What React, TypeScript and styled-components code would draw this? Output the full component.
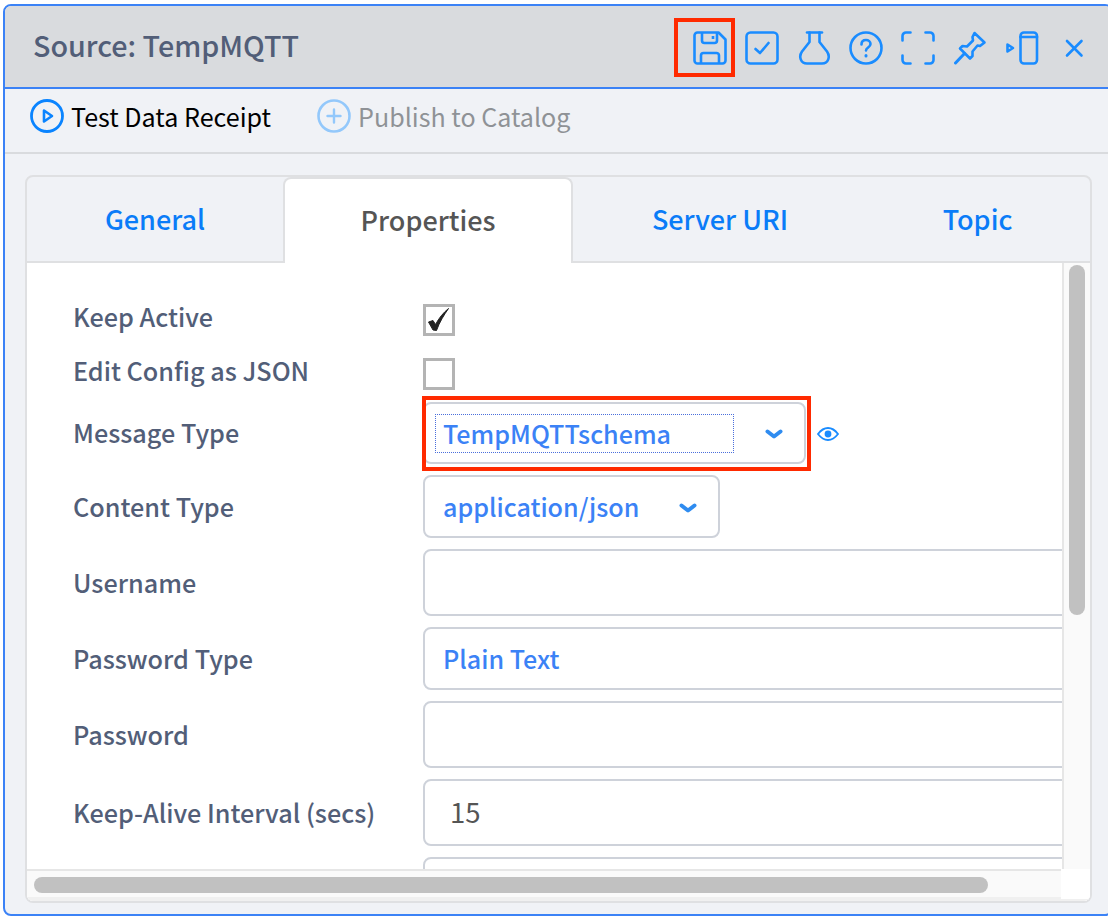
import React from "react";
import styled, { createGlobalStyle } from "styled-components";

const GlobalStyle = createGlobalStyle`
  html, body {
    margin: 0;
    padding: 0;
    background: #ffffff;
    overflow: hidden;
  }
  *, *::before, *::after {
    box-sizing: border-box;
  }
`;

const FONT = `"Noto Sans CJK SC", "Noto Sans", sans-serif`;

const SaveIcon = () => (
  <svg width="34" height="34" viewBox="0 0 34 34" fill="none" stroke="#1a8cff" strokeWidth="2.6" strokeLinejoin="round">
    <path d="M4.500 1.500h21L32.500 8.500v21a3 3 0 0 1-3 3h-25a3 3 0 0 1-3-3v-25a3 3 0 0 1 3-3z" />
    <path d="M9 1.500v8a2.500 2.500 0 0 0 2.500 2.500h10a2.500 2.500 0 0 0 2.500-2.500v-8" />
    <path d="M20 5v3" />
    <path d="M8 32.500v-8a2.500 2.500 0 0 1 2.500-2.500h13a2.500 2.500 0 0 1 2.500 2.500v8" />
  </svg>
);

const CheckSquareIcon = () => (
  <svg width="34" height="34" viewBox="0 0 34 34" fill="none" stroke="#1a8cff" strokeWidth="2.6" strokeLinecap="round" strokeLinejoin="round">
    <rect x="1.500" y="1.500" width="31" height="31" rx="4" />
    <path d="M10.500 18l4.500 4 8.500-10" />
  </svg>
);

const FlaskIcon = () => (
  <svg width="34" height="34" viewBox="0 0 34 34" fill="none" stroke="#1a8cff" strokeWidth="2.6" strokeLinecap="round" strokeLinejoin="round">
    <path d="M10 1.500h15" />
    <path d="M12.500 1.500v9.500L5 20.500c-3.500 5 -1.500 12 5 12h15c6.500 0 8.500-7 5-12L22.500 11V1.500" />
  </svg>
);

const HelpIcon = () => (
  <svg width="34" height="34" viewBox="0 0 34 34" fill="none" stroke="#1a8cff" strokeWidth="2.6" strokeLinecap="round" strokeLinejoin="round">
    <circle cx="17" cy="17" r="15.500" />
    <path d="M12.500 13.500c0-3 2-4.500 4.500-4.500s4.500 1.700 4.500 4c0 3.500-4.500 3.400-4.500 6.500" />
    <path d="M17 24.500v.4" strokeWidth="3" />
  </svg>
);

const CornersIcon = () => (
  <svg width="34" height="34" viewBox="0 0 34 34" fill="none" stroke="#1a8cff" strokeWidth="2.6" strokeLinecap="round" strokeLinejoin="round">
    <path d="M9.500 1.500H5A3.500 3.500 0 0 0 1.500 5v4.500" />
    <path d="M24.500 1.500H29A3.500 3.500 0 0 1 32.500 5v4.500" />
    <path d="M9.500 32.500H5A3.500 3.500 0 0 1 1.500 29v-4.500" />
    <path d="M24.500 32.500H29a3.500 3.500 0 0 0 3.500-3.500v-4.500" />
  </svg>
);

const PinIcon = () => (
  <svg width="34" height="34" viewBox="0 0 34 34" fill="none" stroke="#1a8cff" strokeWidth="2.6" strokeLinecap="round" strokeLinejoin="round">
    <path d="M21.500 2L31.500 11.500 27 15 24.500 14.500 19.500 20.500 19.500 25 17 27.500 7 17.500 9.500 15 14 15.500 20 9.500 19.500 6z" />
    <path d="M11.500 22.500L2.500 32" strokeWidth="3" />
  </svg>
);

const SidePanelIcon = () => (
  <svg width="34" height="34" viewBox="0 0 34 34" fill="none" stroke="#1a8cff" strokeWidth="2.6" strokeLinecap="round" strokeLinejoin="round">
    <rect x="15.500" y="1.500" width="16.500" height="31" rx="3.500" />
    <path d="M15.500 6h16.500" />
    <path d="M2.500 13.500l5.500 3.500-5.500 3.500z" />
  </svg>
);

const CloseIcon = () => (
  <svg width="34" height="34" viewBox="0 0 34 34" fill="none" stroke="#1a8cff" strokeWidth="2.6" strokeLinecap="round">
    <path d="M10 10l14.500 14.500" />
    <path d="M24.500 10L10 24.500" />
  </svg>
);

const PlayCircleIcon = () => (
  <svg width="34" height="34" viewBox="0 0 34 34" fill="none" stroke="#0a84ff" strokeLinejoin="round">
    <circle cx="17" cy="17" r="15.500" strokeWidth="2.800" />
    <path d="M14 11.500l8 5.500-8 5.500z" strokeWidth="2.600" />
  </svg>
);

const PlusCircleIcon = () => (
  <svg width="34" height="34" viewBox="0 0 34 34" fill="none" stroke="#93c8fb" strokeLinecap="round">
    <circle cx="17" cy="17" r="15.500" strokeWidth="2.600" />
    <path d="M17 10.500v13M10.500 17h13" strokeWidth="2.400" />
  </svg>
);

const Chevron = () => (
  <ChevronSvg width="18" height="12" viewBox="0 0 18 12" fill="none" stroke="#2f8cf0" strokeWidth="4" strokeLinecap="round" strokeLinejoin="round">
    <path d="M2.500 3.500l6.500 5 6.500-5" />
  </ChevronSvg>
);

const EyeIcon = () => (
  <EyeSvg width="22" height="14" viewBox="0 0 22 14" fill="none">
    <path d="M1 7c3-4 6.300-6 10-6s7 2 10 6c-3 4-6.300 6-10 6S4 11 1 7z" stroke="#1a8cff" strokeWidth="1.800" />
    <circle cx="11" cy="7" r="3.400" fill="#1a8cff" />
  </EyeSvg>
);

const TickMark = () => (
  <svg width="26" height="26" viewBox="0 0 26 26" fill="none">
    <path d="M2.500 15l4.500-1.500 2.500 4C13 11 17 6 22.500 1.500 18 8 13.500 15 10.500 23.500L7 23z" fill="#222222" stroke="#222222" strokeWidth="1" strokeLinejoin="round" />
  </svg>
);

const headerIcons = [
  { key: "save", icon: <SaveIcon />, highlighted: true },
  { key: "validate", icon: <CheckSquareIcon /> },
  { key: "test", icon: <FlaskIcon /> },
  { key: "help", icon: <HelpIcon /> },
  { key: "fullscreen", icon: <CornersIcon /> },
  { key: "pin", icon: <PinIcon /> },
  { key: "panel", icon: <SidePanelIcon /> },
  { key: "close", icon: <CloseIcon /> },
];

const tabs = [
  { label: "General", width: 256 },
  { label: "Properties", width: 290, active: true },
  { label: "Server URI", width: 294 },
  { label: "Topic", width: 221 },
];

const App = () => {
  return (
    <>
      <GlobalStyle />
      <Page>
        <Window>
          <Header>
            <Title>Source: TempMQTT</Title>
            <HeaderIcons>
              {headerIcons.map((item) => (
                <IconButton key={item.key} $highlighted={item.highlighted}>
                  {item.icon}
                </IconButton>
              ))}
            </HeaderIcons>
          </Header>
          <Toolbar>
            <ToolbarAction>
              <PlayCircleIcon />
              Test Data Receipt
            </ToolbarAction>
            <ToolbarAction $disabled>
              <PlusCircleIcon />
              Publish to Catalog
            </ToolbarAction>
          </Toolbar>
          <Content>
            <Panel>
              <TabBar>
                {tabs.map((tab) => (
                  <Tab key={tab.label} $active={tab.active} $width={tab.width}>
                    {tab.label}
                  </Tab>
                ))}
              </TabBar>
              <PanelBody>
                <Form>
                  <Row $height={54}>
                    <CheckLabel>Keep Active</CheckLabel>
                    <CheckBox>
                      <TickMark />
                    </CheckBox>
                  </Row>
                  <Row $height={44}>
                    <CheckLabel>Edit Config as JSON</CheckLabel>
                    <CheckBox />
                  </Row>
                  <Row $height={73}>
                    <Label>Message Type</Label>
                    <SelectBox $width={383} $marked>
                      <FocusText>TempMQTTschema</FocusText>
                      <Chevron />
                    </SelectBox>
                    <EyeIcon />
                  </Row>
                  <Row $height={74}>
                    <Label>Content Type</Label>
                    <SelectBox $width={297}>
                      <SelectText>application/json</SelectText>
                      <Chevron />
                    </SelectBox>
                  </Row>
                  <Row $height={78}>
                    <Label>Username</Label>
                    <SelectBox $width={700} />
                  </Row>
                  <Row $height={74}>
                    <Label>Password Type</Label>
                    <SelectBox $width={700}>
                      <SelectText>Plain Text</SelectText>
                    </SelectBox>
                  </Row>
                  <Row $height={78}>
                    <Label>Password</Label>
                    <SelectBox $width={700} />
                  </Row>
                  <Row $height={78}>
                    <Label>Keep-Alive Interval (secs)</Label>
                    <SelectBox $width={700}>
                      <InputValue>15</InputValue>
                    </SelectBox>
                  </Row>
                  <Row $height={78}>
                    <Label />
                    <SelectBox $width={700} />
                  </Row>
                </Form>
                <VerticalTrack>
                  <VerticalThumb />
                </VerticalTrack>
                <HorizontalTrack>
                  <HorizontalThumb />
                </HorizontalTrack>
                <ScrollCorner />
              </PanelBody>
            </Panel>
          </Content>
        </Window>
      </Page>
    </>
  );
};

export default App;

const Page = styled.div`
  width: 1108px;
  height: 918px;
  padding: 4px 0 2px 3px;
  background: #ffffff;
  font-family: ${FONT};
  overflow: hidden;
`;

const Window = styled.div`
  width: 1110px;
  height: 912px;
  display: flex;
  flex-direction: column;
  background: #f0f2f6;
  border: 2px solid #3b82f6;
  border-radius: 8px;
  overflow: hidden;
`;

const Header = styled.div`
  flex: none;
  height: 83px;
  display: flex;
  align-items: center;
  justify-content: space-between;
  padding: 0 20px 4px 28px;
  background: #d9dbde;
  border-bottom: 2px solid #3b82f6;
`;

const Title = styled.div`
  font-size: 28.700px;
  line-height: 36px;
  font-weight: 500;
  color: #525e78;
`;

const HeaderIcons = styled.div`
  display: flex;
  gap: 18px;
  padding-top: 6px;
`;

const IconButton = styled.div<{ $highlighted?: boolean }>`
  position: relative;
  width: 34px;
  height: 34px;
  display: flex;
  align-items: center;
  justify-content: center;

  ${(p) =>
    p.$highlighted &&
    `
    &::before {
      content: "";
      position: absolute;
      left: -19px;
      top: -13px;
      width: 61px;
      height: 59px;
      border: 4px solid #ff2a00;
    }
  `}
`;

const Toolbar = styled.div`
  flex: none;
  height: 65px;
  display: flex;
  align-items: center;
  gap: 46px;
  padding: 0 0 9px 25px;
  border-bottom: 2px solid #d9dbde;
`;

const ToolbarAction = styled.div<{ $disabled?: boolean }>`
  display: flex;
  align-items: center;
  gap: 7px;
  font-size: 25.100px;
  line-height: 34px;
  color: ${(p) => (p.$disabled ? "#8f9296" : "#000000")};
`;

const Content = styled.div`
  flex: 1;
  min-height: 0;
  padding: 21px 19px 11px 20px;
`;

const Panel = styled.div`
  height: 100%;
  display: flex;
  flex-direction: column;
  border: 2px solid #dfe0e2;
  border-radius: 8px;
  overflow: hidden;
`;

const TabBar = styled.div`
  flex: none;
  height: 86px;
  display: flex;
  align-items: stretch;
  border-bottom: 2px solid #dfe0e2;
`;

const Tab = styled.div<{ $active?: boolean; $width: number }>`
  width: ${(p) => p.$width}px;
  height: ${(p) => (p.$active ? "86px" : "84px")};
  display: flex;
  align-items: center;
  justify-content: center;
  padding-bottom: ${(p) => (p.$active ? "2px" : "0")};
  font-size: 27px;
  line-height: 34px;
  font-weight: 500;
  color: ${(p) => (p.$active ? "#555555" : "#0a7cf8")};
  background: ${(p) => (p.$active ? "#ffffff" : "transparent")};
  ${(p) =>
    p.$active &&
    `
    border: 2px solid #dfe0e2;
    border-bottom: none;
    border-radius: 8px 8px 0 0;
  `}
`;

const PanelBody = styled.div`
  position: relative;
  flex: 1;
  min-height: 0;
  background: #ffffff;
  overflow: hidden;
`;

const Form = styled.div`
  display: flex;
  flex-direction: column;
  padding: 41px 0 0 46px;
`;

const Row = styled.div<{ $height: number }>`
  flex: none;
  height: ${(p) => p.$height}px;
  display: flex;
  align-items: flex-start;
`;

const Label = styled.div`
  flex: none;
  width: 350px;
  height: calc(100% - 11px);
  display: flex;
  align-items: center;
  padding-bottom: 2px;
  font-size: 25.200px;
  font-weight: 500;
  line-height: 32px;
  color: #525e78;
`;

const CheckLabel = styled(Label)`
  height: 26px;
`;

const CheckBox = styled.div`
  flex: none;
  width: 32px;
  height: 32px;
  display: flex;
  align-items: center;
  justify-content: center;
  background: #ffffff;
  border: 3px solid #b4b4b4;
`;

const SelectBox = styled.div<{ $width: number; $marked?: boolean }>`
  position: relative;
  flex: none;
  width: ${(p) => p.$width}px;
  height: calc(100% - 11px);
  display: flex;
  align-items: center;
  background: #ffffff;
  border: 2px solid #ced2da;
  border-radius: 8px;

  ${(p) =>
    p.$marked &&
    `
    &::before {
      content: "";
      position: absolute;
      left: -3px;
      top: -8px;
      right: -7px;
      bottom: -9px;
      border: 4px solid #ff2a00;
      pointer-events: none;
    }
  `}
`;

const SelectText = styled.div`
  margin-left: 18px;
  padding-bottom: 2px;
  font-size: 25.100px;
  line-height: 32px;
  font-weight: 500;
  color: #3b82f6;
`;

const FocusText = styled(SelectText)`
  width: 299px;
  height: 39px;
  margin-left: 10px;
  padding: 0 0 0 7px;
  line-height: 36px;
  border: 1px dotted #4a6fdc;
`;

const InputValue = styled.div`
  margin-left: 25px;
  padding-bottom: 4px;
  font-size: 27.500px;
  line-height: 32px;
  color: #555555;
`;

const ChevronSvg = styled.svg`
  position: absolute;
  right: 21px;
  top: 50%;
  margin-top: -5px;
`;

const EyeSvg = styled.svg`
  flex: none;
  margin: 25px 0 0 11px;
`;

const VerticalTrack = styled.div`
  position: absolute;
  top: 0;
  right: 0;
  bottom: 0;
  width: 28px;
  padding: 2px 5px 0 5px;
  background: #fafafa;
  border-left: 2px solid #e6e6e6;
`;

const VerticalThumb = styled.div`
  width: 16px;
  height: 350px;
  background: #c1c1c1;
  border-radius: 8px;
`;

const HorizontalTrack = styled.div`
  position: absolute;
  left: 0;
  right: 0;
  bottom: 0;
  height: 32px;
  padding: 6px 0 0 7px;
  background: #fafafa;
  border-top: 2px solid #e6e6e6;
  border-bottom: 4px solid #f0f0f0;
`;

const HorizontalThumb = styled.div`
  width: 954px;
  height: 16px;
  background: #c1c1c1;
  border-radius: 8px;
`;

const ScrollCorner = styled.div`
  position: absolute;
  right: 0;
  bottom: 2px;
  width: 29px;
  height: 30px;
  background: #ffffff;
`;
